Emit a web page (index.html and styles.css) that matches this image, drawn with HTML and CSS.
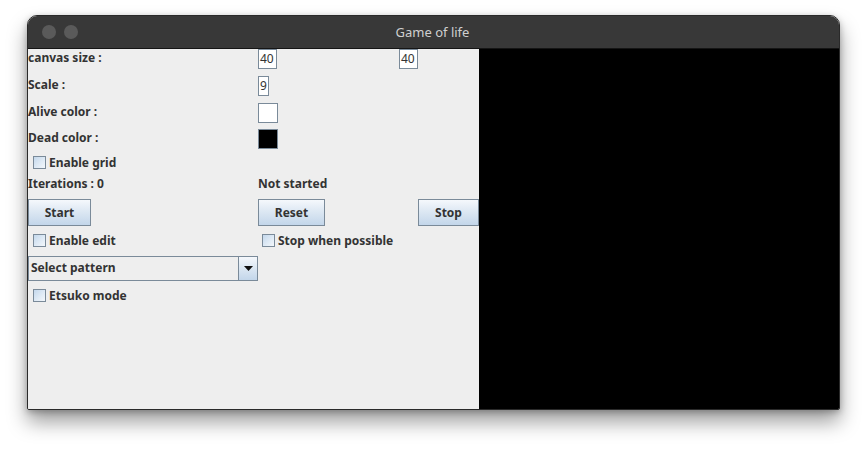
FILE: index.html
```html
<!DOCTYPE html>
<html>
<head>
<meta charset="utf-8">
<title>Game of life</title>
<link rel="stylesheet" href="styles.css">
</head>
<body>
<div class="window">
  <div class="titlebar">
    <div class="lights"><span class="light"></span><span class="light"></span></div>
    <div class="title">Game of life</div>
    <div></div>
  </div>
  <div class="content">
    <div class="panel">
      <div class="row r1">
        <span class="label">canvas size :</span>
        <span class="field w2">40</span>
        <span class="field w2">40</span>
      </div>
      <div class="row r2">
        <span class="label">Scale :</span>
        <span class="field w1">9</span>
      </div>
      <div class="row r3">
        <span class="label">Alive color :</span>
        <span class="swatch alive"></span>
      </div>
      <div class="row r4">
        <span class="label">Dead color :</span>
        <span class="swatch dead"></span>
      </div>
      <div class="row r5">
        <label class="check"><span class="box"></span>Enable grid</label>
      </div>
      <div class="row r6">
        <span class="label plain">Iterations : 0</span>
        <span class="label plain">Not started</span>
      </div>
      <div class="row r7">
        <button class="btn start">Start</button>
        <button class="btn reset">Reset</button>
        <button class="btn stop">Stop</button>
      </div>
      <div class="row r8">
        <label class="check"><span class="box"></span>Enable edit</label>
        <label class="check"><span class="box"></span>Stop when possible</label>
      </div>
      <div class="row r9">
        <div class="combo">
          <span class="combo-text">Select pattern</span>
          <span class="combo-arrow"><svg width="9" height="5" viewBox="0 0 9 5"><path d="M0 0H9L4.5 5Z" fill="#111"/></svg></span>
        </div>
      </div>
      <div class="row r10">
        <label class="check"><span class="box"></span>Etsuko mode</label>
      </div>
    </div>
    <div class="canvas"></div>
  </div>
</div>
</body>
</html>
```

FILE: styles.css
```css
* { box-sizing: border-box; }
html, body { margin: 0; padding: 0; background: #ffffff; }
body { padding: 15px 0 0 27px; min-height: 449px; }

.window {
  width: 813px;
  height: 395px;
  border: 1px solid #2a2a2a;
  border-radius: 10px 10px 2px 2px;
  overflow: hidden;
  box-shadow: 0 12px 20px rgba(0,0,0,0.38), 0 2px 6px rgba(0,0,0,0.25);
  background: #eeeeee;
}

.titlebar {
  height: 33px;
  background: #383838;
  border-bottom: 1px solid #151515;
  display: grid;
  grid-template-columns: 1fr auto 1fr;
  align-items: center;
}
.lights { display: flex; gap: 8px; padding-left: 14px; }
.light { width: 14px; height: 14px; border-radius: 50%; background: #5a5a5a; }
.title {
  font-family: "Noto Sans", "Open Sans", sans-serif;
  font-size: 13px;
  color: #cfcfcf;
  padding-right: 2px;
}

.content { display: flex; height: 360px; }
.panel {
  width: 451px;
  height: 360px;
  background: #eeeeee;
  overflow: hidden;
  font-family: "Noto Sans", "Open Sans", sans-serif;
  font-size: 12px;
  font-weight: bold;
  color: #333333;
}
.canvas { width: 360px; height: 360px; background: #000000; }

.row {
  display: grid;
  grid-template-columns: 230px 141px 80px;
  align-items: center;
  height: 20px;
}
.r2 { margin-top: 7px; }
.r3 { margin-top: 7px; }
.r4 { margin-top: 6px; }
.r5 { margin-top: 3px; }
.r6 { margin-top: 2px; }
.r7 { margin-top: 5px; height: 27px; }
.r8 { margin-top: 4px; }
.r9 { margin-top: 6px; height: 25px; display: block; }
.r10 { margin-top: 4px; }

.label { line-height: 16px; padding-bottom: 3px; white-space: nowrap; }
.label.plain { padding-bottom: 0; }

.field {
  height: 20px;
  border: 1px solid #7a8a99;
  background: #ffffff;
  font-weight: normal;
  font-size: 12px;
  line-height: 18px;
  padding-left: 1px;
  color: #333;
}
.w2 { width: 19px; }
.w1 { width: 11px; }

.swatch { width: 20px; height: 20px; border: 1px solid #7a8a99; }
.alive { background: #ffffff; }
.dead { background: #000000; }

.check { display: flex; align-items: center; padding-left: 5px; white-space: nowrap; }
.r8 .check:nth-child(2) { padding-left: 4px; }
.box {
  width: 13px;
  height: 13px;
  border: 1px solid #7a8a99;
  background: linear-gradient(135deg, #c4d8ec 0%, #dfeaf5 55%, #f3f7fb 100%);
  margin-right: 3px;
}

.btn {
  height: 27px;
  border: 1px solid #7a8a99;
  background: linear-gradient(#f5f8fc 0%, #dde8f3 45%, #c3d6ea 100%);
  font-family: "Noto Sans", "Open Sans", sans-serif;
  font-size: 12px;
  font-weight: bold;
  color: #333333;
  padding: 0;
  margin: 0;
}
.start { width: 63px; }
.reset { width: 67px; }
.stop { width: 61px; margin-left: 19px; }

.combo {
  width: 230px;
  height: 25px;
  border: 1px solid #7a8a99;
  background: #eeeeee;
  display: flex;
  align-items: center;
}
.combo-text { flex: 1; padding-left: 2px; padding-bottom: 2px; }
.combo-arrow {
  width: 19px;
  height: 23px;
  border-left: 1px solid #7a8a99;
  background: linear-gradient(#f5f8fc 0%, #dde8f3 45%, #c3d6ea 100%);
  display: flex;
  align-items: center;
  justify-content: center;
}
```
